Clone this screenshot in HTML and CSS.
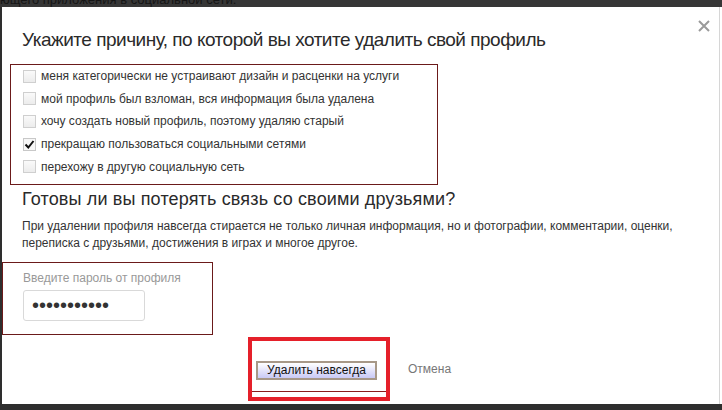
FILE: index.html
```html
<!DOCTYPE html>
<html lang="ru">
<head>
<meta charset="utf-8">
<title>Удаление профиля</title>
<link rel="stylesheet" href="styles.css">
</head>
<body>
<div class="backdrop-line"><span>ющего приложения в социальной сети.</span></div>

<div class="modal">
  <button class="close" type="button" aria-label="Закрыть">
    <svg width="12" height="12" viewBox="0 0 12 12"><path d="M1 1L11 11M11 1L1 11" stroke="#9a9a9a" stroke-width="2"/></svg>
  </button>

  <h1 class="title">Укажите причину, по которой вы хотите удалить свой профиль</h1>

  <div class="reasons mark">
    <label class="reason"><span class="box"></span>меня категорически не устраивают дизайн и расценки на услуги</label>
    <label class="reason"><span class="box"></span>мой профиль был взломан, вся информация была удалена</label>
    <label class="reason"><span class="box"></span>хочу создать новый профиль, поэтому удаляю старый</label>
    <label class="reason"><span class="box checked"><svg width="11" height="11" viewBox="0 0 11 11"><path d="M1.5 5.5L4.3 8.5L9.5 2" fill="none" stroke="#111" stroke-width="2"/></svg></span>прекращаю пользоваться социальными сетями</label>
    <label class="reason"><span class="box"></span>перехожу в другую социальную сеть</label>
  </div>

  <h2 class="subtitle">Готовы ли вы потерять связь со своими друзьями?</h2>
  <p class="note">При удалении профиля навсегда стирается не только личная информация, но и фотографии, комментарии, оценки, переписка с друзьями, достижения в играх и многое другое.</p>

  <div class="password mark">
    <div class="field-label">Введите пароль от профиля</div>
    <input class="field" type="password" value="12345678901">
  </div>

  <div class="actions">
    <div class="submit-wrap">
      <button class="submit" type="button">Удалить навсегда</button>
    </div>
    <a class="cancel" href="#">Отмена</a>
  </div>
</div>
</body>
</html>
```

FILE: styles.css
```css
html, body {
  margin: 0;
  padding: 0;
}

body {
  width: 722px;
  height: 410px;
  overflow: hidden;
  background: #2e2e2e;
  font-family: "Liberation Sans", Arial, sans-serif;
  color: #333;
}

/* dimmed page text peeking above the dialog */
.backdrop-line {
  height: 7px;
  overflow: hidden;
  background: #363636;
  font-size: 13px;
  line-height: 13px;
  color: #151515;
}

.backdrop-line span {
  display: block;
  margin-top: -7px;
}

.modal {
  position: relative;
  margin-left: 2px;
  width: 720px;
  height: 397px;
  background: #fff;
  box-shadow: inset -2px 0 0 #fff, inset -3px 0 0 #d6d6d6;
}

.close {
  position: absolute;
  top: 13px;
  right: 12px;
  padding: 0;
  border: 0;
  background: none;
  width: 12px;
  height: 12px;
  display: flex;
}

.title {
  margin: 0;
  padding: 21px 0 0 20px;
  font-size: 19px;
  letter-spacing: -0.5px;
  line-height: 24px;
  font-weight: normal;
  color: #2a2a2a;
}

.mark {
  border: 1px solid #6b1a1a;
}

.reasons {
  margin: 12px 0 0 8px;
  width: 428px;
  padding: 0 0 6px 12px;
  box-sizing: border-box;
  display: flex;
  flex-direction: column;
}

.reason {
  display: flex;
  align-items: center;
  height: 22.6px;
  font-size: 12px;
  color: #333;
}

.box {
  width: 11px;
  height: 11px;
  border: 1px solid #cfcfcf;
  background: linear-gradient(#fafafa, #ececec);
  margin-right: 5px;
  display: flex;
  align-items: center;
  justify-content: center;
  flex: none;
}

.box.checked {
  border-color: #c8c8c8;
  background: #f7f7f7;
}

.subtitle {
  margin: 3px 0 0 20px;
  font-size: 18px;
  letter-spacing: 0.15px;
  line-height: 22px;
  font-weight: normal;
  color: #2a2a2a;
}

.note {
  margin: 8px 0 0 20px;
  width: 680px;
  font-size: 12px;
  line-height: 17px;
  color: #333;
}

.password {
  margin: 10px 0 0 0;
  width: 211px;
  height: 73px;
  box-sizing: border-box;
  padding: 8px 0 0 20px;
}

.field-label {
  font-size: 12px;
  line-height: 14px;
  color: #999;
}

.field {
  display: block;
  margin-top: 5px;
  width: 122px;
  height: 31px;
  box-sizing: border-box;
  border: 1px solid #d9d9d9;
  border-radius: 3px;
  padding: 0 8px;
  font-family: "Liberation Sans", Arial, sans-serif;
  font-size: 20px;
  letter-spacing: 0;
  color: #333;
  outline: none;
}

.actions {
  display: flex;
  align-items: center;
  margin: 2px 0 0 246px;
}

.submit-wrap {
  width: 142px;
  height: 64px;
  box-sizing: border-box;
  border: 4px solid #e5202a;
  padding: 20px 0 0 4px;
  background: linear-gradient(#fff 0 50px, #8a1c1c 50px 51px, #fff 51px);
}

.submit {
  display: block;
  width: 121px;
  height: 19px;
  padding: 0;
  border: 2px solid #a79888;
  background: linear-gradient(#ffffff, #c9c9f6);
  font-family: "Liberation Sans", Arial, sans-serif;
  font-size: 12px;
  color: #111;
}

.cancel {
  margin-left: 18px;
  font-size: 12px;
  color: #777;
  text-decoration: none;
}
```
